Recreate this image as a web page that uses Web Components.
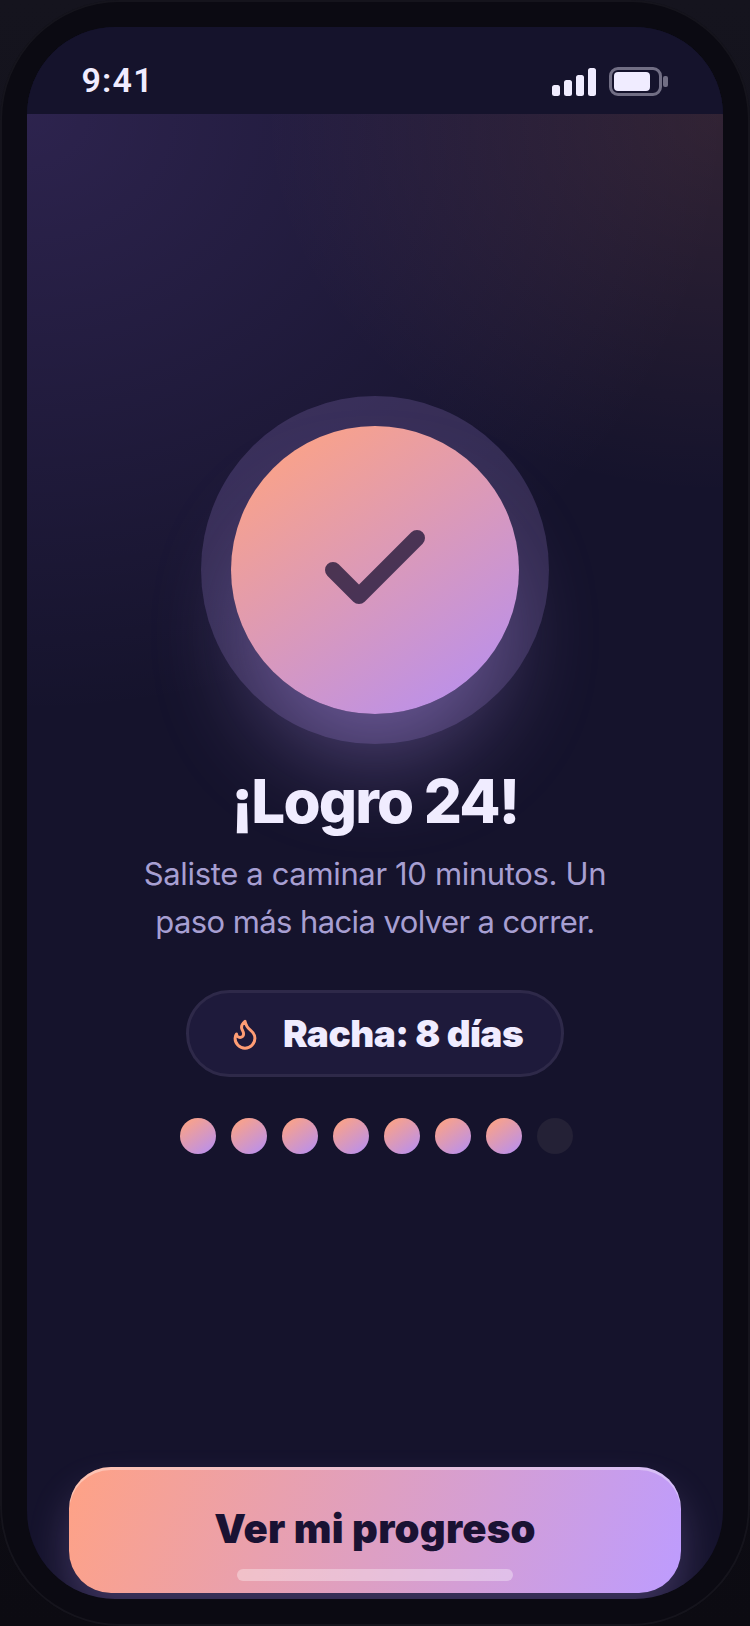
<!DOCTYPE html>
<html lang="es">
<head>
<meta charset="utf-8">
<title>Logro 24</title>
<style>
html,body{margin:0;padding:0;width:750px;height:1626px;overflow:hidden;background:linear-gradient(180deg,#15141e 0%,#0c0b12 100%);}
</style>
</head>
<body>
<phone-frame>
  <status-bar slot="status"></status-bar>
  <achievement-hero></achievement-hero>
  <h-title></h-title>
  <streak-pill days="8"></streak-pill>
  <streak-dots filled="7" total="8"></streak-dots>
  <cta-button slot="cta">Ver mi progreso</cta-button>
</phone-frame>
<script>
function def(name, css, html, init){
  customElements.define(name, class extends HTMLElement{
    constructor(){super();const r=this.attachShadow({mode:'open'});r.innerHTML='<style>'+css+'</style>'+html;}
    connectedCallback(){if(init)init.call(this,this.shadowRoot);}
  });
}
def('phone-frame',`
:host{display:block;box-sizing:border-box;width:750px;height:1626px;border-radius:120px;background:#0b0a12;box-shadow:inset 0 0 0 2px rgba(255,255,255,.045);padding:27px;font-family:Inter,"Liberation Sans",sans-serif;}
.screen{position:relative;display:flex;flex-direction:column;width:696px;height:1572px;border-radius:88px;overflow:hidden;background:#15132c;}
main{flex:1;display:flex;flex-direction:column;align-items:center;min-height:0;
background:radial-gradient(ellipse 460px 380px at 100% 0,rgba(255,150,110,.12),rgba(255,150,110,0) 100%),radial-gradient(ellipse 700px 600px at 0 0,rgba(170,120,255,.16),rgba(170,120,255,0) 100%);}
.spacer{flex:1}
`,`<div class="screen"><slot name="status"></slot><main><slot></slot><div class="spacer"></div><slot name="cta"></slot></main></div>`);
def('status-bar',`
:host{display:flex;align-items:flex-start;justify-content:space-between;box-sizing:border-box;height:87px;padding:0 55px 0 54.5px;background:#15132c;color:#f0ecff;}
.time{font:600 34px/1 Roboto,sans-serif;letter-spacing:1.2px;margin-top:36px;}
.right{display:flex;align-items:flex-end;gap:13px;margin-top:39.7px}
.sig{display:flex;align-items:flex-end;gap:4px}
.sig i{display:block;width:8px;background:#f0ecff;border-radius:2.5px}
.batt{display:flex;align-items:center;gap:1px}
.body{box-sizing:border-box;width:53px;height:29px;border:3px solid rgba(240,236,255,.42);border-radius:9px;padding:2px}
.fill{width:36px;height:19px;background:#f0ecff;border-radius:4px}
.tip{width:5px;height:11px;border-radius:2px;background:rgba(240,236,255,.42)}
`,`<span class="time">9:41</span><div class="right"><div class="sig"><i style="height:11px"></i><i style="height:16px"></i><i style="height:21px"></i><i style="height:28px"></i></div><div class="batt"><div class="body"><div class="fill"></div></div><div class="tip"></div></div></div>`);
def('achievement-hero',`
:host{display:block;margin-top:282px;}
.ring{display:flex;align-items:center;justify-content:center;width:348px;height:348px;border-radius:50%;background:rgba(189,156,251,.18);}
.disc{display:flex;align-items:center;justify-content:center;width:288px;height:288px;border-radius:50%;background:linear-gradient(145deg,#f9a28a 12%,#bb90ea 90%);box-shadow:0 64px 100px -24px rgba(189,156,251,.42);}
svg{display:block;opacity:.75}
`,`<div class="ring"><div class="disc"><svg width="120" height="120" viewBox="0 0 120 120" fill="none" stroke="#1a1233" stroke-width="16" stroke-linecap="round" stroke-linejoin="round"><path d="M18 60L44 86L102 28"/></svg></div></div>`);
def('h-title',`
:host{display:flex;flex-direction:column;align-items:center;margin-top:21px;color:#f0ecff;text-align:center}
h1{margin:0;font:800 60px/72px Inter,sans-serif;letter-spacing:-1.8px}
p{margin:13px 0 0;font:400 31px/48px Inter,sans-serif;color:#a79fd2;width:500px}
p span{display:block}
.a{letter-spacing:-.35px}
.b{letter-spacing:-.6px}
`,`<h1>¡Logro 24!</h1><p><span class="a">Saliste a caminar 10 minutos. Un</span><span class="b">paso más hacia volver a correr.</span></p>`);
def('streak-pill',`
:host{display:flex;align-items:center;gap:21px;box-sizing:border-box;height:87px;margin-top:44px;padding:0 38px;border:3px solid #2e2949;border-radius:44px;background:#1e1a3b;color:#f0ecff;}
svg{display:block;flex:none;margin:0 0 0 1px}
span{font:900 37px/1 Inter,sans-serif;white-space:nowrap;letter-spacing:-.55px}
`,`<svg width="34" height="34" viewBox="0 0 24 24" fill="none" stroke="#ff9d74" stroke-width="2.1" stroke-linecap="round" stroke-linejoin="round"><path d="M8.5 14.5A2.5 2.5 0 0 0 11 12c0-1.38-.5-2-1-3-1.072-2.143-.224-4.054 2-6 .5 2.5 2 4.9 4 6.5 2 1.6 3 3.5 3 5.5a7 7 0 1 1-14 0c0-1.153.433-2.294 1-3a2.5 2.5 0 0 0 2.5 2.5z"/></svg><span>Racha: 8 días</span>`);
def('streak-dots',`
:host{display:flex;gap:15px;margin-top:41px;padding-left:3px}
i{display:block;width:36px;height:36px;border-radius:50%;background:#242136}
i.on{background:linear-gradient(145deg,#f9a28a 12%,#bb90ea 90%)}
`,`<i class="on"></i><i class="on"></i><i class="on"></i><i class="on"></i><i class="on"></i><i class="on"></i><i class="on"></i><i></i>`);
def('cta-button',`
:host{position:relative;display:flex;align-items:flex-start;justify-content:center;box-sizing:border-box;flex:none;width:612px;height:126px;margin-bottom:6px;padding-top:36.5px;border-radius:42px;background:linear-gradient(110deg,#ffa285 0%,#bd9cff 100%);box-shadow:inset 0 3px 0 rgba(255,255,255,.35),0 24px 40px rgba(189,156,251,.24);color:#1a1233;font:900 40px/50px Inter,sans-serif;letter-spacing:.25px;}
.home{position:absolute;left:168px;bottom:12px;width:276px;height:12px;border-radius:6px;background:rgba(255,255,255,.35)}
`,`<slot></slot><div class="home"></div>`);
</script>
</body>
</html>
